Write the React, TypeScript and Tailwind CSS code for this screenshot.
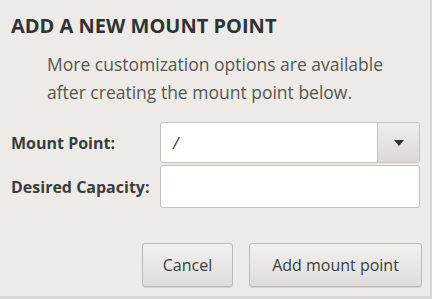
export default function App() {
  return (
    <div
      className="w-[432px] h-[299px] bg-[#edeae7] border-r-2 border-b-[3px] border-[#d9d6d3] text-[#2e3436] overflow-hidden"
      style={{ fontFamily: '"Open Sans", "Noto Sans", sans-serif' }}
    >
      <div className="pl-[11px] pt-[13px]">
        <h1 className="text-[20px] leading-[26px] font-bold text-[#2e3436]">
          ADD A NEW MOUNT POINT
        </h1>
        <p className="mt-[11px] ml-[36px] text-[17.5px] leading-[28px] text-[#555753] whitespace-nowrap">
          More customization options are available
          <br />
          after creating the mount point below.
        </p>
      </div>

      <div className="mt-[16px] pl-[11px] pr-[10px] grid grid-cols-[149px_1fr] gap-y-[2px] items-center">
        <label className="text-[16px] font-bold text-[#3a3d3e] whitespace-nowrap">Mount Point:</label>
        <div className="flex h-[41px] rounded-[3px] border border-[#c4c1bd] bg-white overflow-hidden">
          <div className="flex-1 px-[12px] flex items-center text-[16px] italic text-[#2e3436]">/</div>
          <button className="w-[42px] border-l border-[#c4c1bd] bg-gradient-to-b from-[#eeedec] to-[#dcdad8] flex items-center justify-center">
            <svg width="10" height="6" viewBox="0 0 10 6">
              <path d="M0 0 L10 0 L5 6 Z" fill="#2e3436" />
            </svg>
          </button>
        </div>
        <label className="text-[16px] font-bold text-[#3a3d3e] whitespace-nowrap">Desired Capacity:</label>
        <div className="h-[43px] rounded-[3px] border border-[#c4c1bd] bg-white" />
      </div>

      <div className="mt-[35px] pr-[8px] flex justify-end gap-[16px]">
        <button className="w-[91px] h-[44px] rounded-[3px] border border-[#bdbab6] bg-gradient-to-b from-[#f2f1f0] to-[#dfdddb] text-[16px] text-[#3a3d3e] shadow-[0_1px_0_#d5d2cf]">
          Cancel
        </button>
        <button className="w-[173px] h-[44px] rounded-[3px] border border-[#bdbab6] bg-gradient-to-b from-[#f2f1f0] to-[#dfdddb] text-[16px] text-[#3a3d3e] shadow-[0_1px_0_#d5d2cf]">
          Add mount point
        </button>
      </div>
    </div>
  );
}
